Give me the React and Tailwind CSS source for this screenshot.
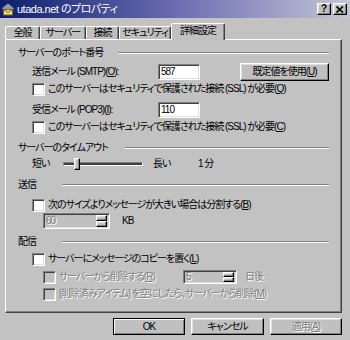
import React from "react";

const raised =
  "bg-[#c0c0c0] border border-t-white border-l-white border-r-black border-b-black shadow-[inset_-1px_-1px_0_#808080,inset_1px_1px_0_#dfdfdf]";
const sunken =
  "border border-t-[#808080] border-l-[#808080] border-r-white border-b-white shadow-[inset_1px_1px_0_#404040,inset_-1px_-1px_0_#dfdfdf]";
const dim = "text-[#808080] [text-shadow:1px_1px_0_#fff]";

function U({ children }) {
  return <span className="underline underline-offset-1">{children}</span>;
}

function Check({ disabled }) {
  return (
    <div
      className={`w-[13px] h-[13px] shrink-0 ${sunken} ${
        disabled ? "bg-[#c0c0c0]" : "bg-white"
      }`}
    />
  );
}

function GroupHead({ label, w, mt }) {
  return (
    <div className={`flex items-center h-[16px] pl-[12px] pr-[12px] ${mt}`}>
      <span className={`${w} shrink-0`}>{label}</span>
      <div className="flex-1 h-[2px] border-t border-t-[#808080] border-b border-b-white" />
    </div>
  );
}

function Spin({ value, w, h }) {
  return (
    <div className={`flex items-center bg-[#c0c0c0] ${sunken} ${w} ${h}`}>
      <span className={`flex-1 pl-[2px] ${dim}`}>{value}</span>
      <div className="flex flex-col w-[13px] h-full p-[1px] mr-[1px]">
        <div className={`flex-1 ${raised}`} />
        <div className={`flex-1 ${raised}`} />
      </div>
    </div>
  );
}

function Tab({ label, w, active }) {
  return (
    <div
      className={`${w} shrink-0 flex items-center justify-center bg-[#c0c0c0] border-t border-l border-t-white border-l-white border-r border-r-[#404040] rounded-t-[2px] shadow-[inset_-1px_0_0_#808080] ${
        active ? "h-[17px] -mb-[1px] relative z-10 pb-[2px]" : "h-[13px]"
      }`}
    >
      {label}
    </div>
  );
}

function BottomButton({ children, w, disabled, isDefault }) {
  const frame = isDefault
    ? "bg-[#c0c0c0] border border-black shadow-[inset_1px_1px_0_#fff,inset_-1px_-1px_0_#808080]"
    : raised;
  return (
    <div
      className={`${w} h-[17px] flex items-center justify-center ${frame} ${
        disabled ? dim : ""
      }`}
    >
      {children}
    </div>
  );
}

export default function App() {
  return (
    <div className="w-[350px] h-[340px] overflow-hidden whitespace-nowrap bg-[#c2c2c2] text-black font-['Liberation_Sans','Noto_Sans_CJK_JP',sans-serif] text-[10px] tracking-[-1px] [font-feature-settings:'palt'] leading-none select-none">
      {/* title bar */}
      <div className="h-[18px] flex items-center bg-linear-to-r from-[#0e1e6c] via-[#6c6cb0] to-[#c6c6d6]">
        <svg width="14" height="14" viewBox="0 0 14 14" className="ml-[1px] shrink-0">
          <polygon points="1,6 7,1 13,6 13,8 1,8" fill="#8a9ac0" stroke="#2a3050" strokeWidth="1" />
          <rect x="2.5" y="7.5" width="9" height="5.5" fill="#f2e27a" stroke="#7a6010" strokeWidth="1" />
          <polyline points="2.5,7.5 7,10.5 11.5,7.5" fill="none" stroke="#7a6010" strokeWidth="1" />
        </svg>
        <span className="ml-[2px] text-white text-[11px] tracking-[-0.5px]">utada.net のプロパティ</span>
        <div className="flex-1" />
        <div className={`w-[14px] h-[12px] flex items-center justify-center ${raised} font-bold text-[10px] tracking-normal`}>
          ?
        </div>
        <div className={`w-[14px] h-[12px] ml-[2px] mr-[3px] flex items-center justify-center ${raised}`}>
          <svg width="8" height="7" viewBox="0 0 8 7">
            <path d="M0.5 0.5 L7 6.5 M7 0.5 L0.5 6.5" stroke="#000" strokeWidth="1.6" />
          </svg>
        </div>
      </div>

      {/* tabs */}
      <div className="flex items-end h-[16px] mt-[5px] ml-[5px]">
        <Tab label="全般" w="w-[35px]" />
        <Tab label="サーバー" w="w-[46px]" />
        <Tab label="接続" w="w-[33px]" />
        <Tab label="セキュリティ" w="w-[52px]" />
        <Tab label="詳細設定" w="w-[54px]" active />
      </div>

      {/* panel */}
      <div className="ml-[5px] w-[337px] h-[274px] border border-t-white border-l-white border-r-[#404040] border-b-[#404040] shadow-[inset_-1px_-1px_0_#808080] pt-[5px]">
        <GroupHead label="サーバーのポート番号" w="w-[100px]" mt="" />

        <div className="flex items-center h-[16px] mt-[3px] pl-[26px]">
          <span className="w-[126px] shrink-0">
            送信メール (SMTP)(<U>O</U>):
          </span>
          <div className={`w-[42px] h-[16px] bg-white flex items-center pl-[2px] ${sunken}`}>587</div>
          <div className={`ml-[40px] w-[89px] h-[18px] flex items-center justify-center ${raised}`}>
            既定値を使用(<U>U</U>)
          </div>
        </div>

        <div className="flex items-center h-[16px] mt-[1px] pl-[26px]">
          <Check />
          <span className="ml-[3px]">
            このサーバーはセキュリティで保護された接続 (SSL) が必要(<U>Q</U>)
          </span>
        </div>

        <div className="flex items-center h-[16px] mt-[5px] pl-[26px]">
          <span className="w-[126px] shrink-0">
            受信メール (POP3)(<U>I</U>):
          </span>
          <div className={`w-[42px] h-[16px] bg-white flex items-center pl-[2px] ${sunken}`}>110</div>
        </div>

        <div className="flex items-center h-[16px] mt-[1px] pl-[26px]">
          <Check />
          <span className="ml-[3px]">
            このサーバーはセキュリティで保護された接続 (SSL) が必要(<U>C</U>)
          </span>
        </div>

        <GroupHead label="サーバーのタイムアウト" w="w-[107px]" mt="mt-[5px]" />

        <div className="flex items-center h-[16px] pl-[26px]">
          <span className="w-[31px] shrink-0">短い</span>
          <div className="relative w-[80px] h-[4px] border border-t-[#808080] border-l-[#808080] border-r-white border-b-white bg-[#404040] shrink-0">
            <div className={`absolute left-[10px] -top-[5px] w-[6px] h-[12px] ${raised}`} />
          </div>
          <span className="ml-[10px] w-[45px] shrink-0">長い</span>
          <span>1 分</span>
        </div>

        <GroupHead label="送信" w="w-[44px]" mt="mt-[5px]" />

        <div className="flex items-center h-[16px] mt-[4px] pl-[26px]">
          <Check />
          <span className="ml-[3px]">
            次のサイズよりメッセージが大きい場合は分割する(<U>B</U>)
          </span>
        </div>

        <div className="flex items-center h-[16px] pl-[37px]">
          <Spin value="60" w="w-[67px]" h="h-[16px]" />
          <span className="ml-[12px]">KB</span>
        </div>

        <GroupHead label="配信" w="w-[44px]" mt="mt-[5px]" />

        <div className="flex items-center h-[16px] mt-[1px] pl-[26px]">
          <Check />
          <span className="ml-[3px]">
            サーバーにメッセージのコピーを置く(<U>L</U>)
          </span>
        </div>

        <div className="flex items-center h-[16px] mt-[2px] pl-[37px]">
          <Check disabled />
          <span className={`ml-[3px] w-[124px] shrink-0 ${dim}`}>
            サーバーから削除する(<U>R</U>)
          </span>
          <Spin value="5" w="w-[54px]" h="h-[14px]" />
          <span className={`ml-[8px] ${dim}`}>日後</span>
        </div>

        <div className="flex items-center h-[16px] mt-[1px] pl-[37px]">
          <Check disabled />
          <span className={`ml-[3px] ${dim}`}>
            [削除済みアイテム] を空にしたら、サーバーから削除(<U>M</U>)
          </span>
        </div>
      </div>

      {/* buttons */}
      <div className="flex justify-end gap-[6px] pr-[8px] mt-[5px]">
        <BottomButton w="w-[72px]" isDefault>OK</BottomButton>
        <BottomButton w="w-[73px]">キャンセル</BottomButton>
        <BottomButton w="w-[72px]" disabled>
          適用(<U>A</U>)
        </BottomButton>
      </div>
    </div>
  );
}
